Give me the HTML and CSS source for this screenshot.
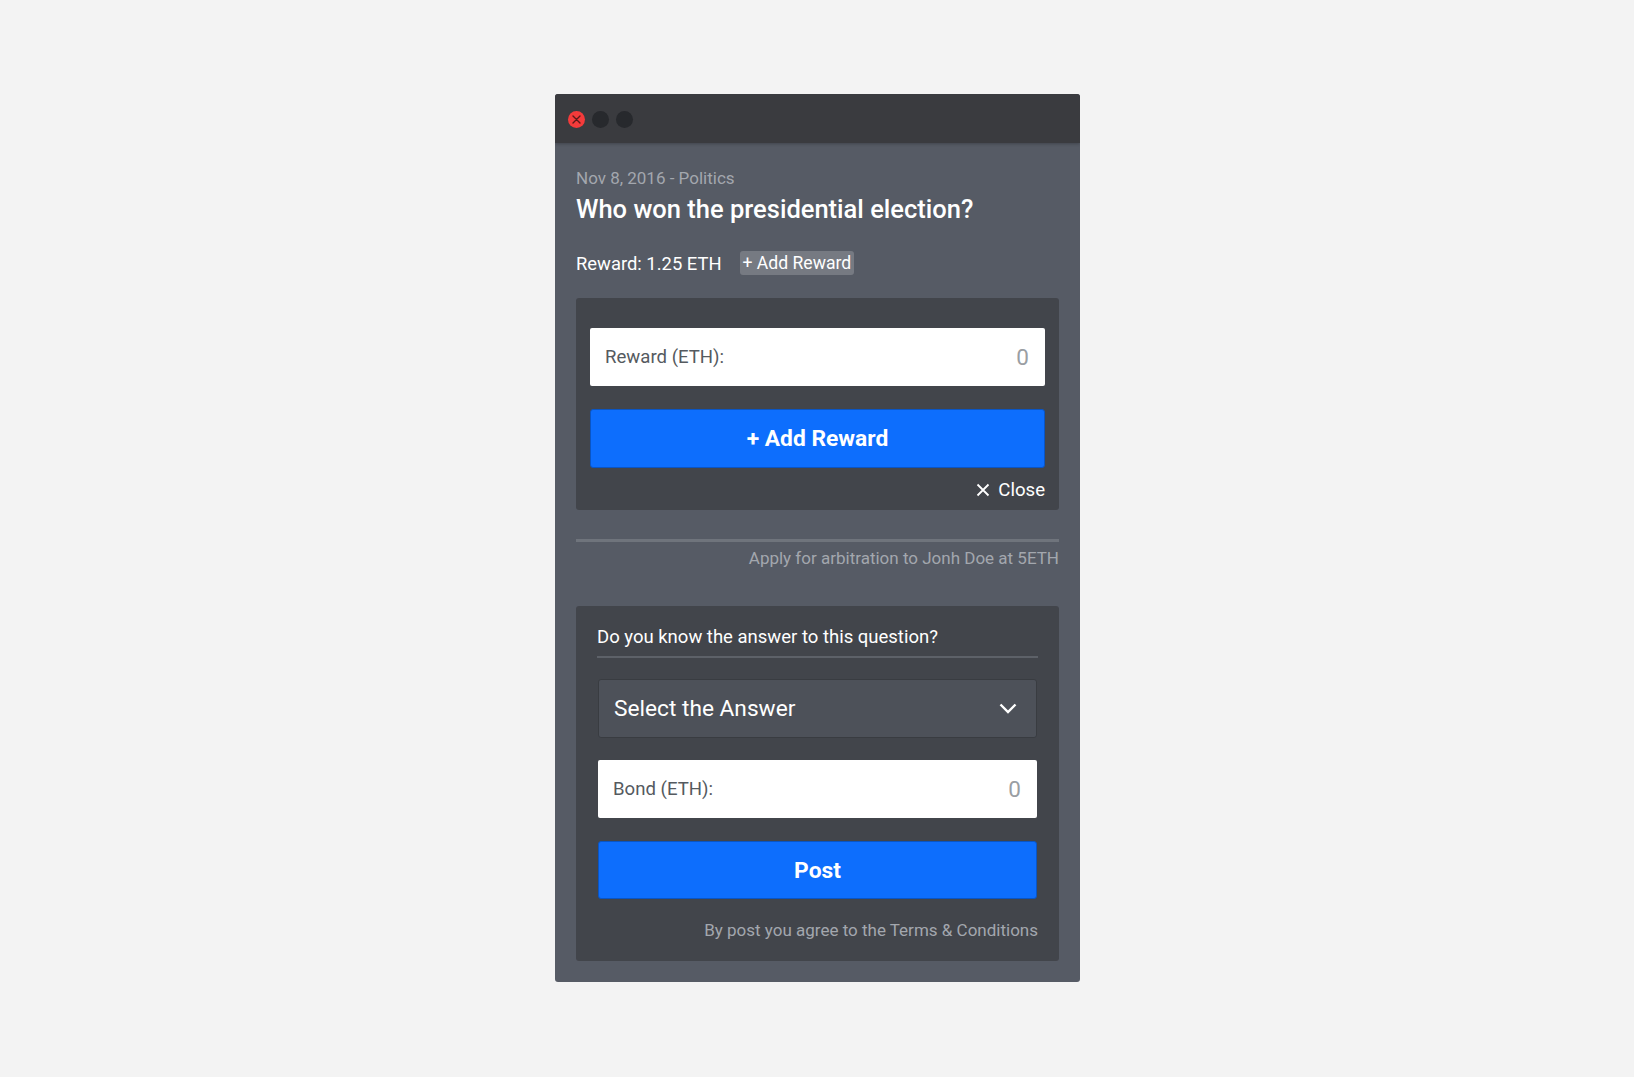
FILE: index.html
```html
<!DOCTYPE html>
<html>
<head>
<meta charset="utf-8">
<link rel="stylesheet" href="styles.css">
</head>
<body>
<div class="page">
  <div class="window">
    <div class="titlebar">
      <span class="light light-close">
        <svg width="9" height="9" viewBox="0 0 9 9"><path d="M1 1L8 8M8 1L1 8" stroke="#5a1a1a" stroke-width="1.4" stroke-linecap="round"/></svg>
      </span>
      <span class="light"></span>
      <span class="light"></span>
    </div>
    <div class="content">
      <div class="meta">Nov 8, 2016 - Politics</div>
      <h1 class="title">Who won the presidential election?</h1>
      <div class="reward-row">
        <span class="reward-text">Reward: 1.25 ETH</span>
        <span class="badge">+ Add Reward</span>
      </div>
      <div class="card card-reward">
        <div class="field">
          <span class="field-label">Reward (ETH):</span>
          <span class="field-value">0</span>
        </div>
        <button class="btn">+ Add Reward</button>
        <div class="close-row">
          <span class="close">
            <svg width="14" height="14" viewBox="0 0 14 14"><path d="M1.5 1.5L12.5 12.5M12.5 1.5L1.5 12.5" stroke="#ffffff" stroke-width="1.8"/></svg>
            Close
          </span>
        </div>
      </div>
      <div class="divider"></div>
      <div class="arbitration">Apply for arbitration to Jonh Doe at 5ETH</div>
      <div class="card card-answer">
        <div class="question">Do you know the answer to this question?</div>
        <div class="answer-body">
          <div class="select">
            <span>Select the Answer</span>
            <svg width="18" height="11" viewBox="0 0 18 11"><path d="M1.5 1.5L9 9L16.5 1.5" fill="none" stroke="#ffffff" stroke-width="2.4"/></svg>
          </div>
          <div class="field">
            <span class="field-label">Bond (ETH):</span>
            <span class="field-value">0</span>
          </div>
          <button class="btn">Post</button>
        </div>
        <div class="terms">By post you agree to the Terms &amp; Conditions</div>
      </div>
    </div>
  </div>
</div>
</body>
</html>
```

FILE: styles.css
```css
* { box-sizing: border-box; }
html, body { margin: 0; padding: 0; }
body {
  background: #f3f3f3;
  font-family: Roboto, "Liberation Sans", Arial, sans-serif;
  width: 1634px;
  height: 1077px;
  overflow: hidden;
}
.page {
  padding-top: 94px;
  display: flex;
  justify-content: center;
}
.window {
  width: 525px;
  margin-left: 1px;
  background: #565b65;
  border-radius: 3px;
  overflow: hidden;
}
.titlebar {
  height: 49px;
  background: #3a3b3f;
  display: flex;
  align-items: center;
  gap: 7px;
  padding-left: 13px;
  padding-top: 1px;
  box-shadow: 0 1px 3px rgba(0,0,0,0.25);
  position: relative;
}
.light {
  width: 17px;
  height: 17px;
  border-radius: 50%;
  background: #27292d;
  display: flex;
  align-items: center;
  justify-content: center;
}
.light-close { background: #f43b3b; }
.content {
  padding: 25px 21px 21px 21px;
}
.meta {
  color: #a3a7ae;
  font-size: 17px;
  line-height: 20px;
}
.title {
  margin: 6px 0 0 0;
  color: #ffffff;
  font-size: 25.5px;
  font-weight: 500;
  line-height: 30px;
}
.reward-row {
  margin-top: 27px;
  display: flex;
  align-items: center;
  height: 24px;
}
.reward-text {
  color: #ffffff;
  font-size: 18.4px;
}
.badge {
  margin-left: 18px;
  background: #767a82;
  color: #ffffff;
  font-size: 17.6px;
  line-height: 24px;
  padding: 0 3px;
  border-radius: 3px;
}
.card {
  background: #42454b;
  border-radius: 3px;
}
.card-reward {
  margin-top: 23px;
  padding: 30px 14px 8px 14px;
}
.field {
  height: 58px;
  background: #ffffff;
  border-radius: 2px;
  display: flex;
  align-items: center;
  justify-content: space-between;
  padding: 0 16px 0 15px;
}
.field-label {
  color: #555a60;
  font-size: 18.6px;
}
.field-value {
  color: #9a9ea3;
  font-size: 22.5px;
}
.btn {
  display: block;
  width: 100%;
  height: 59px;
  margin-top: 23px;
  background: #0d6efd;
  border: 1px solid #0a55c4;
  border-radius: 3px;
  color: #ffffff;
  font-family: Roboto, "Liberation Sans", Arial, sans-serif;
  font-weight: 700;
  font-size: 22.8px;
  padding: 0;
}
.close-row {
  display: flex;
  justify-content: flex-end;
  margin-top: 10px;
}
.close {
  display: flex;
  align-items: center;
  gap: 8px;
  color: #ffffff;
  font-size: 18.6px;
  line-height: 24px;
}
.divider {
  margin-top: 29px;
  height: 3px;
  background: #6f747c;
}
.arbitration {
  margin-top: 6px;
  text-align: right;
  color: #a3a7ae;
  font-size: 17px;
  line-height: 20px;
}
.card-answer {
  margin-top: 38px;
  padding: 19px 21px 21px 21px;
}
.question {
  color: #ffffff;
  font-size: 18.5px;
  line-height: 24px;
  padding-bottom: 7px;
  border-bottom: 2px solid #5d6168;
}
.answer-body {
  padding: 0 1px;
}
.select {
  margin-top: 21px;
  height: 59px;
  background: #4d5159;
  border: 1px solid #393c41;
  border-radius: 3px;
  display: flex;
  align-items: center;
  justify-content: space-between;
  padding: 0 19px 0 15px;
  color: #ffffff;
  font-size: 22.7px;
}
.answer-body .field {
  margin-top: 22px;
}
.answer-body .btn {
  margin-top: 23px;
  height: 58px;
}
.terms {
  margin-top: 21px;
  text-align: right;
  color: #a3a7ae;
  font-size: 17px;
  line-height: 20px;
}
```
